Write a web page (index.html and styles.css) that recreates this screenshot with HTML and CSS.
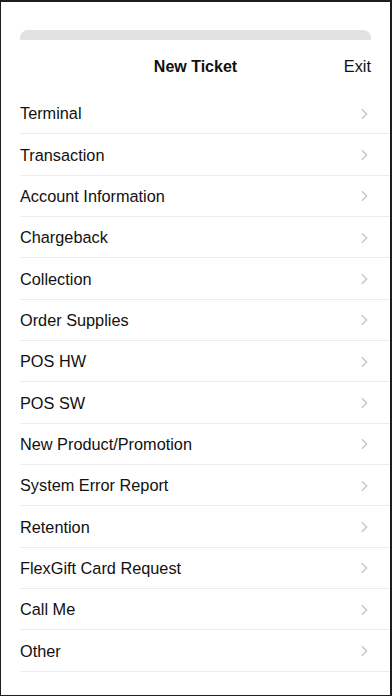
FILE: index.html
```html
<!DOCTYPE html>
<html lang="en">
<head>
  <meta charset="UTF-8">
  <meta name="viewport" content="width=device-width, initial-scale=1.0">
  <title>New Ticket</title>
  <link rel="stylesheet" href="styles.css">
</head>
<body>
  <div class="screen">
    <div class="sheet-top"></div>
    <header class="nav">
      <h1>New Ticket</h1>
      <span class="exit">Exit</span>
    </header>
    <ul class="list">
      <li><span>Terminal</span><svg viewBox="0 0 8 13"><path d="M1 1l5.5 5.5L1 12"/></svg></li>
      <li><span>Transaction</span><svg viewBox="0 0 8 13"><path d="M1 1l5.5 5.5L1 12"/></svg></li>
      <li><span>Account Information</span><svg viewBox="0 0 8 13"><path d="M1 1l5.5 5.5L1 12"/></svg></li>
      <li><span>Chargeback</span><svg viewBox="0 0 8 13"><path d="M1 1l5.5 5.5L1 12"/></svg></li>
      <li><span>Collection</span><svg viewBox="0 0 8 13"><path d="M1 1l5.5 5.5L1 12"/></svg></li>
      <li><span>Order Supplies</span><svg viewBox="0 0 8 13"><path d="M1 1l5.5 5.5L1 12"/></svg></li>
      <li><span>POS HW</span><svg viewBox="0 0 8 13"><path d="M1 1l5.5 5.5L1 12"/></svg></li>
      <li><span>POS SW</span><svg viewBox="0 0 8 13"><path d="M1 1l5.5 5.5L1 12"/></svg></li>
      <li><span>New Product/Promotion</span><svg viewBox="0 0 8 13"><path d="M1 1l5.5 5.5L1 12"/></svg></li>
      <li><span>System Error Report</span><svg viewBox="0 0 8 13"><path d="M1 1l5.5 5.5L1 12"/></svg></li>
      <li><span>Retention</span><svg viewBox="0 0 8 13"><path d="M1 1l5.5 5.5L1 12"/></svg></li>
      <li><span>FlexGift Card Request</span><svg viewBox="0 0 8 13"><path d="M1 1l5.5 5.5L1 12"/></svg></li>
      <li><span>Call Me</span><svg viewBox="0 0 8 13"><path d="M1 1l5.5 5.5L1 12"/></svg></li>
      <li><span>Other</span><svg viewBox="0 0 8 13"><path d="M1 1l5.5 5.5L1 12"/></svg></li>
    </ul>
  </div>
</body>
</html>
```

FILE: styles.css
```css
* {
  margin: 0;
  padding: 0;
  box-sizing: border-box;
}

html, body {
  width: 100%;
  height: 100%;
}

body {
  background-color: #1e1e1e;
  font-family: "Liberation Sans", Arial, sans-serif;
  color: #111;
  overflow: hidden;
}

.screen {
  height: 693px;
  margin: 2px 2px 1px 1px;
  padding-top: 28px;
  background-color: #fff;
}

.sheet-top {
  height: 10px;
  margin: 0 19px;
  border-radius: 8px 8px 0 0;
  background-color: #e2e2e5;
}

.nav {
  display: flex;
  justify-content: center;
  align-items: center;
  position: relative;
  height: 53px;
}

.nav h1 {
  font-size: 16px;
  font-weight: bold;
}

.nav .exit {
  position: absolute;
  right: 19px;
  font-size: 16.3px;
}

.list {
  list-style: none;
  margin-left: 19px;
}

.list li {
  display: flex;
  justify-content: space-between;
  align-items: center;
  height: 41.35px;
  padding-top: 1px;
  padding-right: 22px;
  border-bottom: 1px solid #ececee;
  font-size: 16.3px;
}

.list svg {
  width: 7px;
  height: 12px;
  fill: none;
  stroke: #c4c4c8;
  stroke-width: 1.5;
}
```
